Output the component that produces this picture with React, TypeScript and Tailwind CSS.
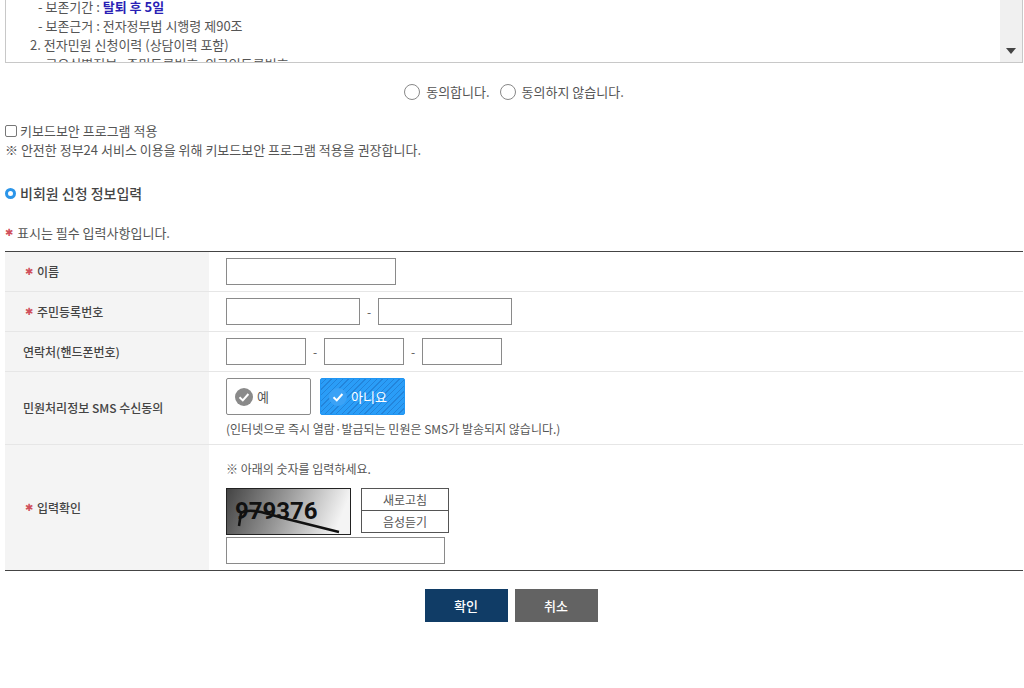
import { useState } from "react";
import type { ReactNode } from "react";
import clsx from "clsx";

const boxClass = "h-[27px] border border-[#8a8a8a] bg-white px-2 text-xs outline-none";

function Star() {
  return (
    <span className="w-2 text-center font-['DejaVu_Sans'] text-[10px] text-[#d0505c]">
      ✱
    </span>
  );
}

type RowProps = {
  label: string;
  htmlFor?: string;
  required?: boolean;
  children: ReactNode;
};

function Row({ label, htmlFor, required, children }: RowProps) {
  return (
    <tr className="border-b border-[#e6e6e6] last:border-b-0">
      <th
        scope="row"
        className="w-[204px] bg-[#f4f4f4] text-left align-middle text-xs font-medium text-[#444]"
      >
        <label
          htmlFor={htmlFor}
          className={clsx("flex items-center gap-1", required ? "pl-5" : "pl-[18px]")}
        >
          {required && <Star />}
          {label}
        </label>
      </th>
      <td className="py-1.5 pr-2 pl-[17px]">{children}</td>
    </tr>
  );
}

function Dash() {
  return <span className="w-[18px] text-center">-</span>;
}

type SmsOptionProps = {
  label: string;
  checked: boolean;
  onChange: () => void;
};

function SmsOption({ label, checked, onChange }: SmsOptionProps) {
  return (
    <label
      className={clsx(
        "flex h-[37px] w-[85px] cursor-pointer items-center gap-1 rounded-xs border pl-2 text-[13px]",
        checked
          ? "border-[#2196f3] bg-[repeating-linear-gradient(135deg,#2a9df7_0px,#2a9df7_3px,#2384da_3px,#2384da_4px)] text-white"
          : "border-[#8a8a8a] bg-white text-[#555]"
      )}
    >
      <input
        type="radio"
        name="sms"
        className="sr-only"
        checked={checked}
        onChange={onChange}
      />
      <svg viewBox="0 0 18 18" className="size-[18px]" aria-hidden="true">
        <circle cx="9" cy="9" r="9" fill={checked ? "#3ba2f6" : "#8a8a8a"} />
        <path d="M4.5 9.2 7.8 12.4 13.4 6" fill="none" stroke="#fff" strokeWidth="2" />
      </svg>
      {label}
    </label>
  );
}

function Captcha() {
  return (
    <svg
      viewBox="0 0 123 45"
      className="h-[47px] w-[125px] border border-[#222]"
      role="img"
      aria-label="자동입력 방지 숫자"
    >
      <defs>
        <linearGradient id="shade" x1="0" y1="0" x2="1" y2="0.15">
          <stop offset="0" stopColor="#444" />
          <stop offset="0.5" stopColor="#999" />
          <stop offset="1" stopColor="#f4f4f4" />
        </linearGradient>
      </defs>
      <rect width="123" height="45" fill="url(#shade)" />
      <text
        x="8"
        y="30"
        fontFamily="Roboto, sans-serif"
        fontSize="24"
        fontWeight="700"
        fill="#111"
      >
        979376
      </text>
      <path
        d="M12 37 14 24 Q20 20 34 23 L60 30 112 43"
        fill="none"
        stroke="#111"
        strokeWidth="2.5"
      />
    </svg>
  );
}

export default function App() {
  const [agree, setAgree] = useState<string>("");
  const [sms, setSms] = useState<string>("no");

  return (
    <main className="bg-white pr-px pb-10 pl-[5px] font-['Noto_Sans_CJK_KR',sans-serif] text-xs leading-[19px] text-[#555]">
      <section className="flex h-[63px] overflow-hidden border-r border-b border-l border-[#c8c8c8]">
        <div className="-mt-[3px] flex-1 pl-6 text-[13px] whitespace-nowrap">
          <p className="pl-2">
            - 보존기간 : <strong className="font-bold text-[#2a1fb5]">탈퇴 후 5일</strong>
          </p>
          <p className="pl-2">- 보존근거 : 전자정부법 시행령 제90조</p>
          <p>2. 전자민원 신청이력 (상담이력 포함)</p>
          <p className="pl-2">- 고유식별정보 : 주민등록번호, 외국인등록번호</p>
        </div>
        <button
          type="button"
          aria-label="아래로"
          className="flex w-[22px] items-end justify-center bg-[#f0f0f0] pb-2"
        >
          <svg viewBox="0 0 10 6" className="h-1.5 w-2.5" fill="#444">
            <path d="M0 0H10L5 6Z" />
          </svg>
        </button>
      </section>

      <div className="mt-[19px] flex justify-center gap-2.5 text-[13px]">
        <label className="flex items-center gap-1.5">
          <input
            type="radio"
            name="agree"
            checked={agree === "yes"}
            onChange={() => setAgree("yes")}
            className="size-4 appearance-none rounded-full border border-[#888] checked:border-4"
          />
          동의합니다.
        </label>
        <label className="flex items-center gap-1.5">
          <input
            type="radio"
            name="agree"
            checked={agree === "no"}
            onChange={() => setAgree("no")}
            className="size-4 appearance-none rounded-full border border-[#888] checked:border-4"
          />
          동의하지 않습니다.
        </label>
      </div>

      <div className="mt-5 text-[13px]">
        <label className="flex items-center gap-[3px]">
          <input
            type="checkbox"
            className="size-3 appearance-none rounded-xs border border-[#777] checked:bg-[#2196f3]"
          />
          키보드보안 프로그램 적용
        </label>
        <p>※ 안전한 정부24 서비스 이용을 위해 키보드보안 프로그램 적용을 권장합니다.</p>
      </div>

      <h2 className="mt-6 flex items-center gap-1 text-sm font-medium text-[#444]">
        <span className="size-[11px] rounded-full border-3 border-[#2b95e9]" />
        비회원 신청 정보입력
      </h2>

      <p className="mt-5 flex items-center gap-1 text-[13px]">
        <Star />
        표시는 필수 입력사항입니다.
      </p>

      <table className="mt-[9px] w-full border-collapse border-y border-[#444]">
        <tbody>
          <Row label="이름" htmlFor="name" required>
            <input id="name" type="text" className={clsx(boxClass, "block w-[170px]")} />
          </Row>
          <Row label="주민등록번호" htmlFor="rrn1" required>
            <div className="flex items-center">
              <input id="rrn1" type="text" className={clsx(boxClass, "w-[134px]")} />
              <Dash />
              <input
                type="password"
                aria-label="주민등록번호 뒷자리"
                className={clsx(boxClass, "w-[134px]")}
              />
            </div>
          </Row>
          <Row label="연락처(핸드폰번호)" htmlFor="tel1">
            <div className="flex items-center">
              <input id="tel1" type="text" className={clsx(boxClass, "w-20")} />
              <Dash />
              <input
                type="text"
                aria-label="연락처 가운데자리"
                className={clsx(boxClass, "w-20")}
              />
              <Dash />
              <input
                type="text"
                aria-label="연락처 끝자리"
                className={clsx(boxClass, "w-20")}
              />
            </div>
          </Row>
          <Row label="민원처리정보 SMS 수신동의">
            <div className="flex gap-[9px]">
              <SmsOption label="예" checked={sms === "yes"} onChange={() => setSms("yes")} />
              <SmsOption label="아니요" checked={sms === "no"} onChange={() => setSms("no")} />
            </div>
            <p className="mt-1">
              (인터넷으로 즉시 열람·발급되는 민원은 SMS가 발송되지 않습니다.)
            </p>
          </Row>
          <Row label="입력확인" htmlFor="captcha" required>
            <p className="mt-2">※ 아래의 숫자를 입력하세요.</p>
            <div className="mt-2.5 flex gap-2.5">
              <Captcha />
              <div className="flex w-[88px] flex-col">
                <button type="button" className="h-[23px] border border-[#555] bg-white">
                  새로고침
                </button>
                <button type="button" className="-mt-px h-[23px] border border-[#555] bg-white">
                  음성듣기
                </button>
              </div>
            </div>
            <input
              id="captcha"
              type="text"
              className={clsx(boxClass, "mt-0.5 block w-[219px]")}
            />
          </Row>
        </tbody>
      </table>

      <div className="mt-[18px] flex justify-center gap-[7px] pr-1.5 text-[13px] font-medium text-white">
        <button type="button" className="h-[33px] w-[83px] bg-[#103c66]">
          확인
        </button>
        <button type="button" className="h-[33px] w-[83px] bg-[#636363]">
          취소
        </button>
      </div>
    </main>
  );
}
